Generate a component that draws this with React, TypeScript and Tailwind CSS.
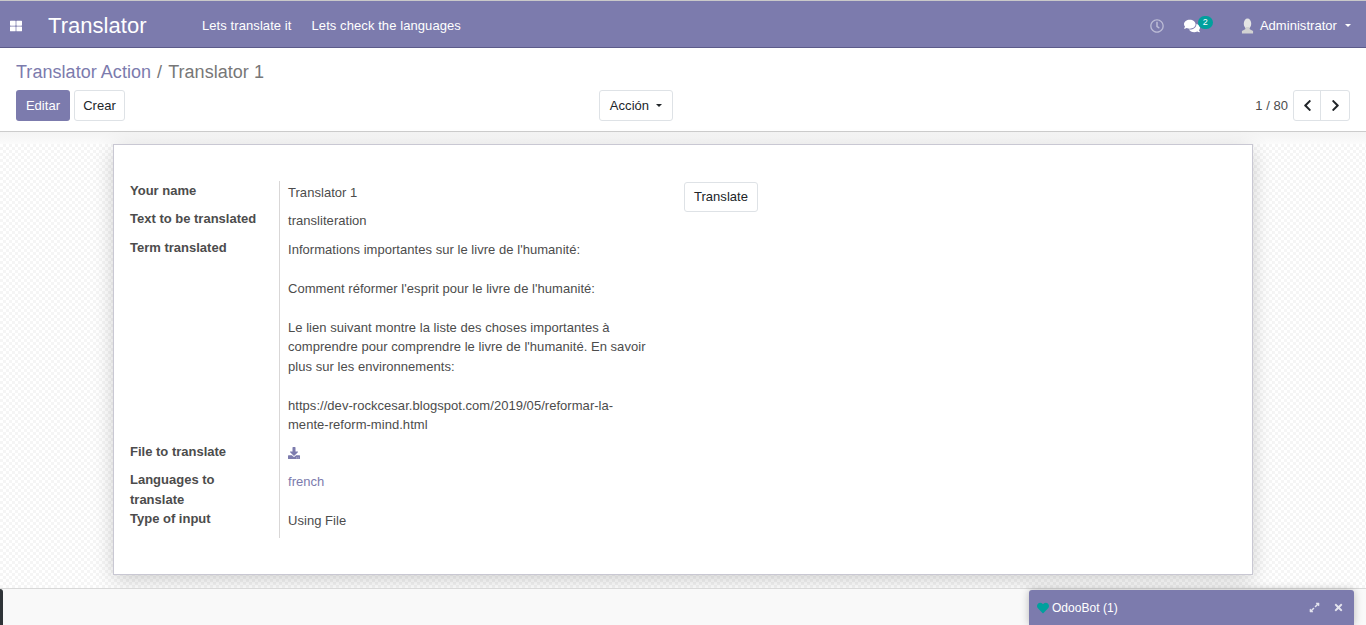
import { FaChevronLeft, FaChevronRight, FaComments, FaDownload, FaExpandAlt, FaHeart, FaRegClock, FaThLarge, FaTimes } from "react-icons/fa";

const labelClass = "font-bold tracking-normal leading-[19.5px] pl-[16px] pr-2";
const valueClass = "border-l border-[#d9d7d7] pl-2 pt-[2px] pb-[6.5px] leading-[19.5px]";

function Navbar() {
  return (
    <header className="h-[48px] shrink-0 flex items-center pt-[3px] bg-[#7c7bad] border-t border-[#c9c9c9] border-b border-b-[#5c5b8a] text-white">
      <button className="w-[32px] pl-[10px] flex items-center">
        <FaThLarge className="text-[12px]" />
      </button>
      <span className="ml-[16px] text-[22px] leading-none w-[154px]">Translator</span>
      <nav className="flex gap-5 text-[13px] tracking-[0.08px]">
        <a>Lets translate it</a>
        <a>Lets check the languages</a>
      </nav>
      <div className="ml-auto flex items-center text-[13px]">
        <FaRegClock className="text-[14px] text-[#bcbcd6]" />
        <span className="relative ml-[20px] w-[57px]">
          <FaComments className="text-[16px]" />
          <span className="absolute -top-[2px] left-[14px] h-[13px] w-[15px] rounded-full bg-[#00a09d] text-[9px] leading-[13px] text-center">2</span>
        </span>
        <svg width="13" height="16" viewBox="0 0 14 16" className="mr-[6px]">
          <ellipse cx="7" cy="5.5" rx="4" ry="5.5" fill="#e4e4e4" />
          <path d="M5 9h4l.5 2.5L13 13.5V16H1v-2.5l3.5-2z" fill="#d2d2d2" />
        </svg>
        <span>Administrator</span>
        <span className="ml-[8px] mr-[15px] border-x-[3px] border-t-[3px] border-x-transparent border-t-white" />
      </div>
    </header>
  );
}

function ControlPanel() {
  return (
    <section className="h-[84px] shrink-0 bg-white border-b border-[#cccccc] px-4">
      <div className="h-[42px] pt-[12px] text-[18px] leading-[25px]">
        <a className="text-[#7c7bad]">Translator Action</a>
        <span className="text-[#777777] mx-[6px]">/</span>
        <span className="text-[#777777]">Translator 1</span>
      </div>
      <div className="flex items-center">
        <div className="w-[583px] flex gap-1">
          <button className="h-[31px] w-[54px] rounded-[3px] bg-[#7c7bad] text-white">Editar</button>
          <button className="h-[31px] w-[51px] rounded-[3px] border border-[#dee2e6] bg-white text-[#212529]">Crear</button>
        </div>
        <button className="h-[31px] w-[74px] flex items-center justify-center gap-[7px] rounded-[3px] border border-[#dee2e6] bg-white text-[#212529]">
          Acción
          <span className="border-x-[3px] border-t-[3px] border-x-transparent border-t-[#212529]" />
        </button>
        <div className="flex-1 flex items-center justify-end">
          <span className="mr-[5px]">1 / 80</span>
          <div className="flex h-[31px] rounded-[3px] border border-[#dee2e6] text-[#212529]">
            <button className="w-[27px] flex items-center justify-center border-r border-[#dee2e6]">
              <FaChevronLeft className="text-[13px]" />
            </button>
            <button className="w-[28px] flex items-center justify-center">
              <FaChevronRight className="text-[13px]" />
            </button>
          </div>
        </div>
      </div>
    </section>
  );
}

function FormSheet() {
  return (
    <div className="mx-auto w-[1140px] h-[431px] bg-white border border-[#c9c8d3] shadow-[0_5px_20px_-1px_rgba(0,0,0,0.2)] pt-[36px]">
      <div className="flex">
        <div className="w-[553px] grid grid-cols-[165px_1fr]">
          <div className={labelClass}>Your name</div>
          <div className={valueClass}>Translator 1</div>

          <div className={labelClass}>Text to be translated</div>
          <div className="border-l border-[#d9d7d7] pl-2 pt-[2px] pb-[7.5px] leading-[19.5px]">transliteration</div>

          <div className={labelClass}>Term translated</div>
          <div className="border-l border-[#d9d7d7] pl-2 pr-[20px] pt-[1.5px] pb-[7px] leading-[19.5px]">
            <p>Informations importantes sur le livre de l'humanité:</p>
            <br />
            <p>Comment réformer l'esprit pour le livre de l'humanité:</p>
            <br />
            <p>Le lien suivant montre la liste des choses importantes à comprendre pour comprendre le livre de l'humanité. En savoir plus sur les environnements:</p>
            <br />
            <p>https://dev-rockcesar.blogspot.com/2019/05/reformar-la-mente-reform-mind.html</p>
          </div>

          <div className={labelClass}>File to translate</div>
          <div className="border-l border-[#d9d7d7] pl-2 pt-[2px] pb-[7px] leading-[19.5px]">
            <span className="h-[19.5px] flex items-center text-[#7c7bad]">
              <FaDownload className="text-[12px]" />
            </span>
          </div>

          <div className={labelClass}>Languages to translate</div>
          <div className={valueClass}>
            <a className="text-[#7c7bad]">french</a>
          </div>

          <div className={labelClass}>Type of input</div>
          <div className="border-l border-[#d9d7d7] pl-2 pt-[2px] pb-[7px] leading-[19.5px]">Using File</div>
        </div>
        <div className="ml-[17px] pt-[1px]">
          <button className="h-[30px] w-[74px] rounded-[3px] border border-[#dee2e6] bg-white text-[#212529]">Translate</button>
        </div>
      </div>
    </div>
  );
}

function ChatWindow() {
  return (
    <div className="absolute right-[12px] bottom-0 w-[325px] h-[35px] flex items-center rounded-t-[3px] bg-[#7c7bad] px-2 text-[12px] text-white shadow-[0_0_8px_rgba(0,0,0,0.25)]">
      <FaHeart className="text-[12px] text-[#00a09d]" />
      <span className="ml-[3px]">OdooBot (1)</span>
      <FaExpandAlt className="ml-auto text-[11px] text-[#e4e4ee]" />
      <FaTimes className="ml-[13px] mr-[2px] text-[11px] text-[#e4e4ee]" />
    </div>
  );
}

export default function App() {
  return (
    <div className="relative h-[625px] w-[1366px] overflow-hidden flex flex-col bg-white text-[13px] tracking-[0.04px] text-[#4c4c4c] font-['Liberation_Sans',Arial,sans-serif]">
      <Navbar />
      <ControlPanel />
      <main className="h-[456px] shrink-0 bg-[repeating-conic-gradient(#f5f5f5_0_25%,#ffffff_0_50%)] bg-[length:6px_6px]">
        <div className="h-[12px] bg-gradient-to-b from-[#f4f4f4] to-[#fbfbfb]" />
        <FormSheet />
      </main>
      <footer className="relative flex-1 bg-[#f9f9f9] border-t border-[#d9d9d9]">
        <span className="absolute left-0 top-0 h-full w-[3px] rounded-tr-[3px] bg-[#2f3438]" />
      </footer>
      <ChatWindow />
    </div>
  );
}
